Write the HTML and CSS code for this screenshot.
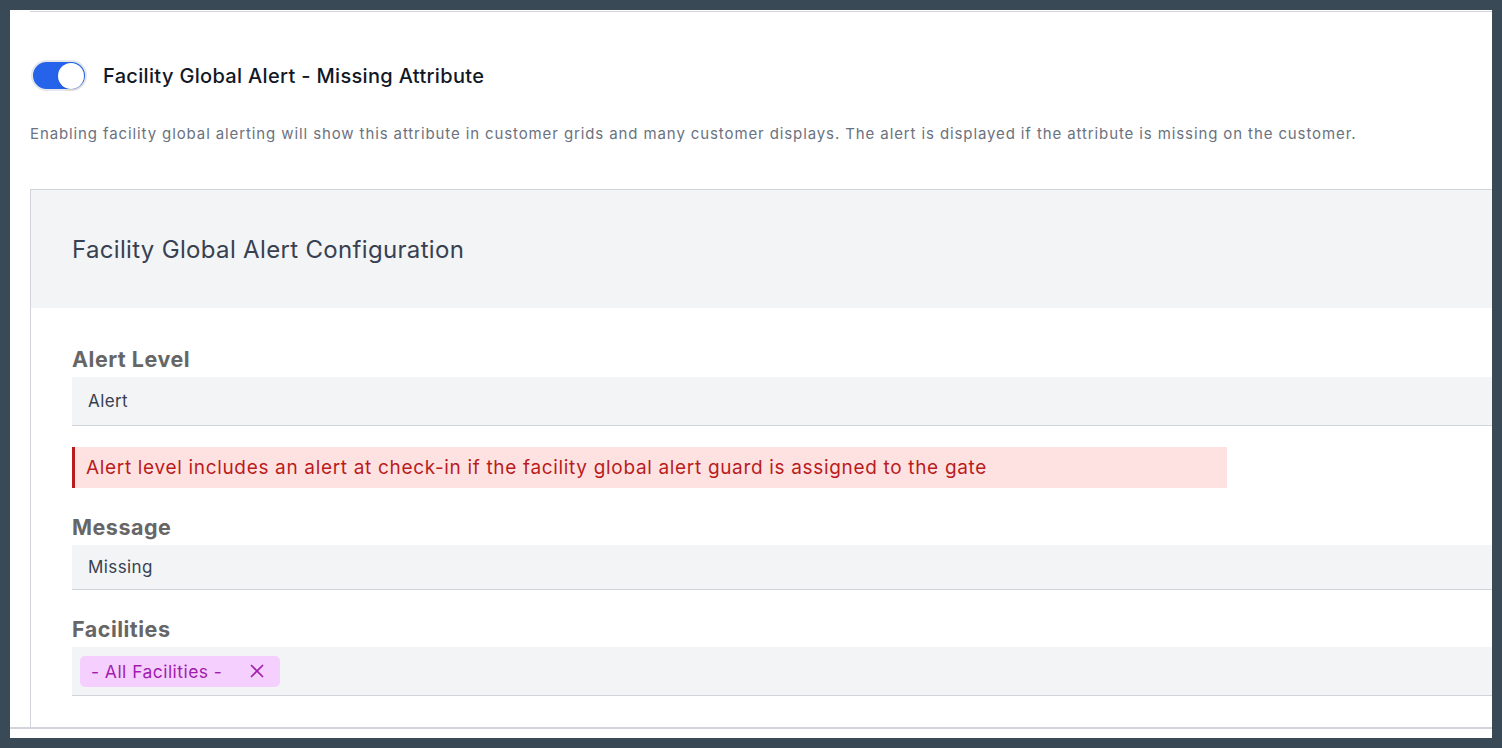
FILE: index.html
```html
<!DOCTYPE html>
<html>
<head>
<meta charset="utf-8">
<link rel="stylesheet" href="styles.css">
</head>
<body>
<div class="panel">
  <div class="topline"></div>
  <div class="toggle-row">
    <span class="toggle"><span class="knob"></span></span>
    <span class="toggle-label">Facility Global Alert - Missing Attribute</span>
  </div>
  <p class="desc">Enabling facility global alerting will show this attribute in customer grids and many customer displays. The alert is displayed if the attribute is missing on the customer.</p>
  <div class="card">
    <div class="card-head">Facility Global Alert Configuration</div>
    <div class="card-body">
      <div class="label">Alert Level</div>
      <div class="input select">Alert</div>
      <div class="alert">Alert level includes an alert at check-in if the facility global alert guard is assigned to the gate</div>
      <div class="label">Message</div>
      <div class="input text">Missing</div>
      <div class="label">Facilities</div>
      <div class="input select chips">
        <span class="chip">- All Facilities -<span class="chip-x"><svg width="14" height="14" viewBox="0 0 14 14"><path d="M1.5 1.5L12.5 12.5M12.5 1.5L1.5 12.5" stroke="#a21caf" stroke-width="1.7" fill="none" stroke-linecap="round"/></svg></span></span>
      </div>
    </div>
  </div>
  <div class="bottomline"></div>
</div>
</body>
</html>
```

FILE: styles.css
```css
html, body {
  margin: 0;
  padding: 0;
}
body {
  background: #394a56;
  font-family: Inter, "Noto Sans", "Liberation Sans", sans-serif;
  width: 1502px;
  height: 748px;
  overflow: hidden;
}
.panel {
  margin: 10px;
  width: 1482px;
  height: 728px;
  background: #ffffff;
  overflow: hidden;
  position: relative;
}
.topline {
  margin-left: 20px;
  height: 2px;
  border-bottom: 1px solid #d1d5db;
  box-sizing: border-box;
}
.toggle-row {
  display: flex;
  align-items: center;
  margin: 48px 0 0 21px;
  height: 31px;
}
.toggle {
  width: 56px;
  height: 31px;
  box-sizing: border-box;
  border-radius: 16px;
  border: 2px solid #e5e7eb;
  background: #2563eb;
  display: flex;
  align-items: center;
  justify-content: flex-end;
  padding-right: 1px;
}
.knob {
  width: 26px;
  height: 26px;
  border-radius: 50%;
  background: #ffffff;
  box-shadow: 0 1px 2px rgba(0,0,0,0.15);
}
.toggle-label {
  margin-left: 16px;
  font-size: 20px;
  font-weight: 500;
  letter-spacing: 0.33px;
  color: #111827;
}
.desc {
  margin: 33px 0 0 20px;
  font-size: 15px;
  letter-spacing: 0.89px;
  color: #6b7280;
  line-height: 20px;
}
.card {
  margin: 45px 0 0 20px;
  width: 1500px;
  border: 1px solid #d1d5db;
  box-sizing: border-box;
}
.card-head {
  background: #f3f4f6;
  height: 118px;
  display: flex;
  align-items: center;
  padding-left: 41px;
  font-size: 24px;
  letter-spacing: 0.33px;
  color: #374151;
}
.card-body {
  padding: 33px 0 31px 41px;
}
.label {
  font-size: 21.5px;
  font-weight: 700;
  letter-spacing: 0.5px;
  color: #666666;
  line-height: 36px;
}
.input {
  background: #f3f4f6;
  border-bottom: 1px solid #d1d5db;
  box-sizing: border-box;
  display: flex;
  align-items: center;
  padding-left: 16px;
  font-size: 17px;
  letter-spacing: 0.4px;
  color: #374151;
}
.select {
  height: 49px;
}
.text {
  height: 45px;
}
.alert {
  margin: 21px 0 21px 0;
  width: 1155px;
  height: 41px;
  box-sizing: border-box;
  background: #fee2e2;
  border-left: 3px solid #b91c1c;
  padding-left: 11px;
  display: flex;
  align-items: center;
  font-size: 19px;
  letter-spacing: 0.67px;
  color: #b91c1c;
}
.input + .label {
  margin-top: 21px;
}
.chips {
  padding-left: 8px;
}
.chip {
  display: inline-flex;
  align-items: center;
  height: 31px;
  width: 200px;
  box-sizing: border-box;
  padding-left: 11px;
  background: #f5d0fe;
  border-radius: 5px;
  color: #a21caf;
  font-size: 17.5px;
  letter-spacing: 0.45px;
}
.chip-x {
  margin-left: auto;
  margin-right: 16px;
  display: flex;
}
.bottomline {
  position: absolute;
  left: 0;
  right: 0;
  top: 717px;
  border-top: 2px solid #d1d5db;
}
```
